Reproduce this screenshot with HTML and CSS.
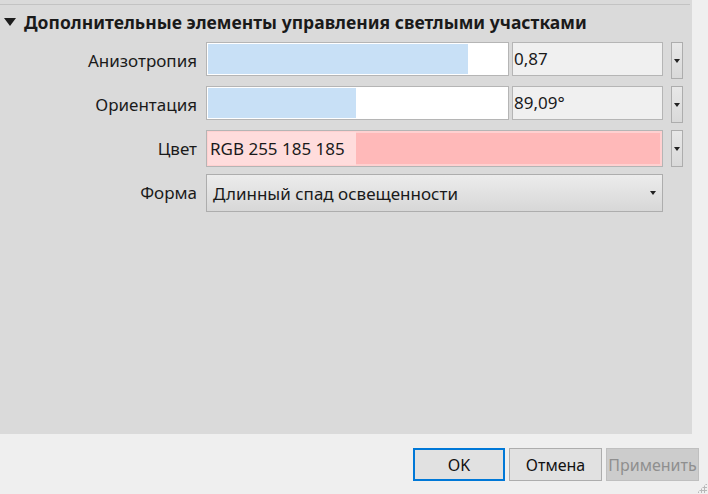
FILE: index.html
```html
<!DOCTYPE html>
<html lang="ru">
<head>
<meta charset="utf-8">
<link rel="stylesheet" href="styles.css">
</head>
<body>
<div class="dialog">
  <div class="main">
    <div class="panel">
      <div class="topline"></div>
      <div class="header">
        <span class="tri"></span>
        <span class="title">Дополнительные элементы управления светлыми участками</span>
      </div>
      <div class="grid">
        <div class="label">Анизотропия</div>
        <div class="slider"><div class="fill" style="width:87%"></div></div>
        <div class="value">0,87</div>
        <div class="drop"><span class="arrow"></span></div>

        <div class="label">Ориентация</div>
        <div class="slider"><div class="fill" style="width:49.5%"></div></div>
        <div class="value">89,09°</div>
        <div class="drop"><span class="arrow"></span></div>

        <div class="label">Цвет</div>
        <div class="color"><span class="colortext">RGB 255 185 185</span></div>
        <div class="drop"><span class="arrow"></span></div>

        <div class="label">Форма</div>
        <div class="combo"><span>Длинный спад освещенности</span><span class="arrow"></span></div>
      </div>
    </div>
    <div class="side"></div>
  </div>
  <div class="footer">
    <button class="btn ok">OK</button>
    <button class="btn">Отмена</button>
    <button class="btn disabled">Применить</button>
    <div class="grip"></div>
  </div>
</div>
</body>
</html>
```
FILE: styles.css
```css
* { box-sizing: border-box; }
html, body { margin: 0; padding: 0; }
body {
  width: 708px;
  height: 494px;
  overflow: hidden;
  background: #efefef;
  font-family: "Noto Sans", "Open Sans", sans-serif;
  color: #1a1a1a;
}
.dialog { width: 708px; height: 494px; display: flex; flex-direction: column; }
.main { display: flex; height: 434px; }
.panel {
  width: 692px;
  background: #dadada;
  padding-top: 4px;
}
.side { flex: 1; background: #efefef; }
.topline { height: 1px; background: #c3c3c3; margin-right: 2px; }
.header {
  display: flex;
  align-items: center;
  height: 33px;
  padding-left: 4px;
}
.tri {
  width: 0; height: 0;
  border-left: 6.5px solid transparent;
  border-right: 6.5px solid transparent;
  border-top: 8px solid #1e1e1e;
  margin-top: 1px;
}
.title {
  margin-left: 8px;
  font-weight: bold;
  font-size: 17.5px;
  letter-spacing: 0.02px;
  color: #1a1a1a;
}
.grid {
  display: grid;
  grid-template-columns: 203px 303px 151px 17px;
  column-gap: 3px;
  row-gap: 7px;
  margin-top: 4px;
  grid-auto-rows: 37px;
}
.grid > .drop { margin-left: 5px; }
.label {
  text-align: right;
  font-size: 17px;
  line-height: 34px;
  height: 36px;
  padding-top: 2px;
  padding-right: 6px;
}
.slider {
  height: 34px;
  border: 1px solid #b5b5b5;
  background: #fff;
  padding: 1px;
}
.fill { height: 100%; background: #c8e0f6; }
.value {
  height: 34px;
  border: 1px solid #b5b5b5;
  background: #f0f0f0;
  font-size: 17px;
  line-height: 32px;
  padding-left: 1px;
}
.drop {
  height: 37px;
  border: 1px solid #adadad;
  background: linear-gradient(#e8e8e8, #d9d9d9);
  display: flex;
  align-items: center;
  justify-content: center;
}
.arrow {
  width: 0; height: 0;
  border-left: 3.5px solid transparent;
  border-right: 3.5px solid transparent;
  border-top: 4px solid #222;
}
.color {
  grid-column: 2 / span 2;
  height: 37px;
  border: 1px solid #b5b5b5;
  background: #ffb9b9;
  padding: 1px;
  box-shadow: inset 0 0 0 2px #ffd0d0;
  display: flex;
}
.colortext {
  background: #ffdcdc;
  font-size: 17px;
  line-height: 33px;
  padding-left: 2px;
  width: 148px;
}
.combo {
  grid-column: 2 / span 2;
  height: 38px;
  border: 1px solid #adadad;
  background: linear-gradient(#ececec, #d7d7d7);
  display: flex;
  align-items: center;
  justify-content: space-between;
  font-size: 17px;
  padding: 0 6px 0 6px;
}
.footer {
  flex: 1;
  display: flex;
  align-items: flex-start;
  justify-content: flex-end;
  padding-top: 14px;
  padding-right: 9px;
  gap: 4px;
  position: relative;
}
.btn {
  width: 93px;
  height: 33px;
  border: 1px solid #adadad;
  background: #e1e1e1;
  font-family: "Noto Sans", "Open Sans", sans-serif;
  font-size: 16px;
  color: #111;
  padding: 0;
}
.btn.ok { width: 92px; border: 2px solid #0078d7; }
.btn.disabled { background: #cccccc; border-color: #bfbfbf; color: #8f8f8f; }
.grip {
  position: absolute;
  right: 1px;
  bottom: 1px;
  width: 10px;
  height: 10px;
  background:
    radial-gradient(circle, #b8b8b8 1px, transparent 1.2px) 0 0 / 3px 3px;
  clip-path: polygon(100% 0, 100% 100%, 0 100%);
}
```
